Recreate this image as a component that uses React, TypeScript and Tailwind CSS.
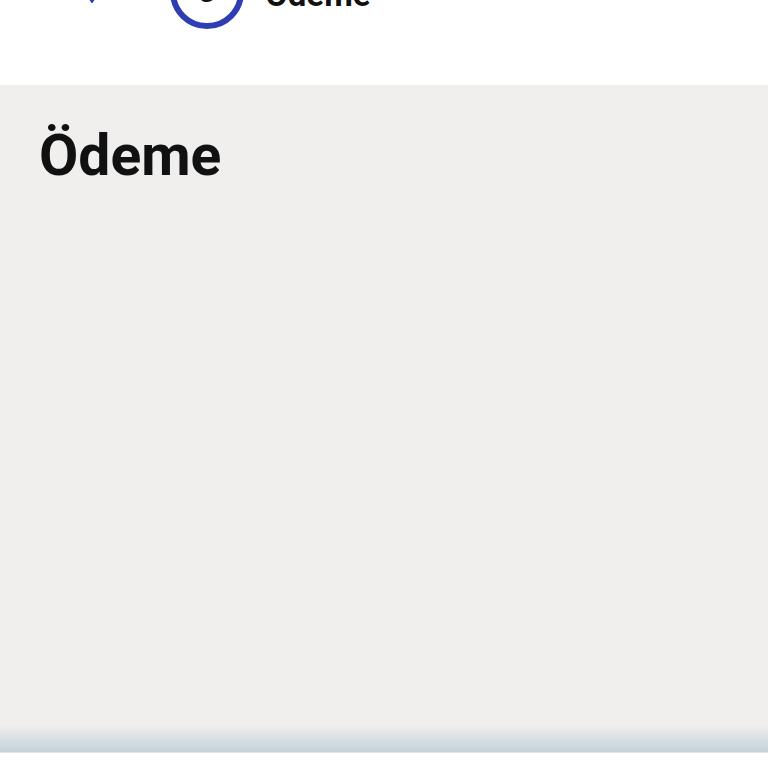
export default function App() {
  return (
    <div className="h-screen flex flex-col overflow-hidden bg-white font-['Roboto',sans-serif]">
      <header className="h-[85px] shrink-0 bg-white overflow-hidden">
        <div className="-mt-[45px] flex items-center h-[74px]">
          <div className="w-[80px] shrink-0" />
          <svg className="w-[24px] h-[24px] -mt-[2px]" viewBox="0 0 24 24" fill="none">
            <path d="M2 8 L12 22 L22 6" stroke="#2f3db5" strokeWidth="3" strokeLinecap="round" />
          </svg>
          <div className="w-[66px] shrink-0" />
          <div className="w-[74px] h-[74px] rounded-full border-[6px] border-[#2f3db5] flex items-center justify-center text-[30px] font-bold text-[#111] leading-none">
            3
          </div>
          <span className="ml-[21px] mt-[4px] text-[33px] font-bold text-[#111] leading-none">Ödeme</span>
        </div>
      </header>
      <main className="flex-1 bg-[#f0efed] px-[39px] pt-[35px]">
        <h1 className="text-[57px] font-bold text-[#111] leading-tight">Ödeme</h1>
      </main>
      <div className="h-[27px] shrink-0 bg-gradient-to-b from-[#f0efed] to-[#c3d1d8]" />
      <div className="h-[16px] shrink-0 bg-white border-t border-[#dde6ea]" />
    </div>
  )
}
